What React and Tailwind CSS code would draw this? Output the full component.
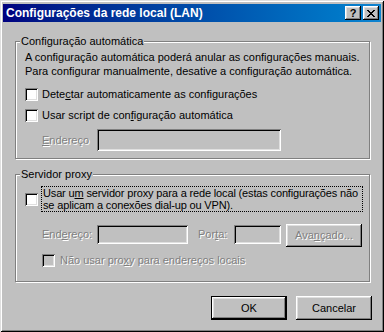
import React from "react";

const xRows = [
  [0, 2, 6, 2],
  [1, 2, 5, 2],
  [2, 4],
  [3, 2],
  [2, 4],
  [1, 2, 5, 2],
  [0, 2, 6, 2],
];

function CloseGlyph() {
  return (
    <svg width="8" height="7" viewBox="0 0 8 7" shapeRendering="crispEdges">
      {xRows.map((r, y) => (
        <g key={y}>
          <rect x={r[0]} y={y} width={r[1]} height="1" fill="#000" />
          {r.length > 2 && <rect x={r[2]} y={y} width={r[3]} height="1" fill="#000" />}
        </g>
      ))}
    </svg>
  );
}

function Check({ disabled }) {
  return (
    <span
      className={`block w-[13px] h-[13px] shrink-0 shadow-[inset_1px_1px_0_#808080,inset_-1px_-1px_0_#fff,inset_2px_2px_0_#000,inset_-2px_-2px_0_#dfdfdf] ${
        disabled ? "bg-[#c0c0c0]" : "bg-white"
      }`}
    />
  );
}

function Field({ className }) {
  return (
    <span
      className={`block bg-[#c0c0c0] shadow-[inset_1px_1px_0_#808080,inset_-1px_-1px_0_#fff,inset_2px_2px_0_#000,inset_-2px_-2px_0_#dfdfdf] ${className}`}
    />
  );
}

function App() {
  const off = "text-[#808080] [text-shadow:1px_1px_0_#fff]";

  return (
    <div className="w-[384px] h-[332px] bg-[#c0c0c0] pt-[4px] px-[3px] flex flex-col font-['Liberation_Sans',Arial,sans-serif] text-[11px] text-black shadow-[inset_1px_1px_0_#dfdfdf,inset_-1px_-1px_0_#000,inset_2px_2px_0_#fff,inset_-2px_-2px_0_#808080]">
      <div className="h-[18px] flex items-center bg-linear-to-r from-[#000080] to-[#1084d0] pl-[3px] pr-[2px]">
        <span className="flex-1 text-white font-bold text-[12px] leading-[18px]">
          Configurações da rede local (LAN)
        </span>
        <span className="w-[16px] h-[14px] flex items-center justify-center bg-[#c0c0c0] font-bold text-[11px] leading-none shadow-[inset_-1px_-1px_0_#000,inset_1px_1px_0_#fff,inset_-2px_-2px_0_#808080,inset_2px_2px_0_#dfdfdf]">
          ?
        </span>
        <span className="ml-[2px] w-[16px] h-[14px] flex items-center justify-center bg-[#c0c0c0] shadow-[inset_-1px_-1px_0_#000,inset_1px_1px_0_#fff,inset_-2px_-2px_0_#808080,inset_2px_2px_0_#dfdfdf]">
          <CloseGlyph />
        </span>
      </div>

      <div className="px-[12px] pt-[12px]">
        <fieldset className="w-[355px] border border-[#808080] shadow-[inset_1px_1px_0_#fff,1px_1px_0_#fff] pb-[7px]">
          <legend className="ml-[4px] px-px leading-[14px] bg-[#c0c0c0]">Configuração automática</legend>
          <div className="pl-[9px] pt-[2px]">
            <p className="leading-[14px]">
              A configuração automática poderá anular as configurações manuais.
              <br />
              Para configurar manualmente, desative a configuração automática.
            </p>
            <div className="mt-[10px] h-[13px] flex items-center gap-[4px]">
              <Check />
              <span>
                Dete<span className="underline">c</span>tar automaticamente as configurações
              </span>
            </div>
            <div className="mt-[8px] h-[13px] flex items-center gap-[4px]">
              <Check />
              <span>
                Usar script de con<span className="underline">f</span>iguração automática
              </span>
            </div>
            <div className="mt-[7px] pl-[17px] h-[22px] flex items-center">
              <span className={`w-[55px] ${off}`}>
                <span className="underline">E</span>ndereço
              </span>
              <Field className="w-[184px] h-[22px]" />
            </div>
          </div>
        </fieldset>

        <fieldset className="mt-[8px] w-[355px] border border-[#808080] shadow-[inset_1px_1px_0_#fff,1px_1px_0_#fff] pb-[14px]">
          <legend className="ml-[4px] px-px leading-[14px] bg-[#c0c0c0]">Servidor proxy</legend>
          <div className="pl-[9px] pt-[5px]">
            <div className="flex items-center gap-[3px]">
              <Check />
              <span className="block w-[322px] border border-dotted border-black leading-[12px] pl-px whitespace-nowrap tracking-[-0.15px]">
                Usar u<span className="underline">m</span> servidor proxy para a rede local (estas configurações não
                <br />
                se aplicam a conexões dial-up ou VPN).
              </span>
            </div>
            <div className="mt-[12px] pl-[17px] h-[23px] flex items-start">
              <span className={`w-[55px] leading-[21px] ${off}`}>
                End<span className="underline">e</span>reço:
              </span>
              <Field className="mt-px w-[91px] h-[19px]" />
              <span className={`ml-[10px] w-[36px] leading-[21px] ${off}`}>
                Por<span className="underline">t</span>a:
              </span>
              <Field className="mt-px w-[47px] h-[19px]" />
              <span
                className={`ml-[5px] w-[76px] h-[23px] flex items-center justify-center shadow-[inset_-1px_-1px_0_#000,inset_1px_1px_0_#fff,inset_-2px_-2px_0_#808080,inset_2px_2px_0_#dfdfdf] ${off}`}
              >
                Ava<span className="underline">n</span>çado...
              </span>
            </div>
            <div className="mt-[7px] pl-[17px] h-[13px] flex items-center gap-[5px]">
              <Check disabled />
              <span className={off}>
                Não usar pro<span className="underline">x</span>y para endereços locais
              </span>
            </div>
          </div>
        </fieldset>
      </div>

      <div className="mt-[14px] pr-[9px] flex justify-end gap-[9px]">
        <button className="w-[76px] h-[24px] border border-black bg-[#c0c0c0] shadow-[inset_-1px_-1px_0_#000,inset_1px_1px_0_#fff,inset_-2px_-2px_0_#808080,inset_2px_2px_0_#dfdfdf]">
          OK
        </button>
        <button className="w-[76px] h-[24px] bg-[#c0c0c0] shadow-[inset_-1px_-1px_0_#000,inset_1px_1px_0_#fff,inset_-2px_-2px_0_#808080,inset_2px_2px_0_#dfdfdf]">
          Cancelar
        </button>
      </div>
    </div>
  );
}

export default App;
